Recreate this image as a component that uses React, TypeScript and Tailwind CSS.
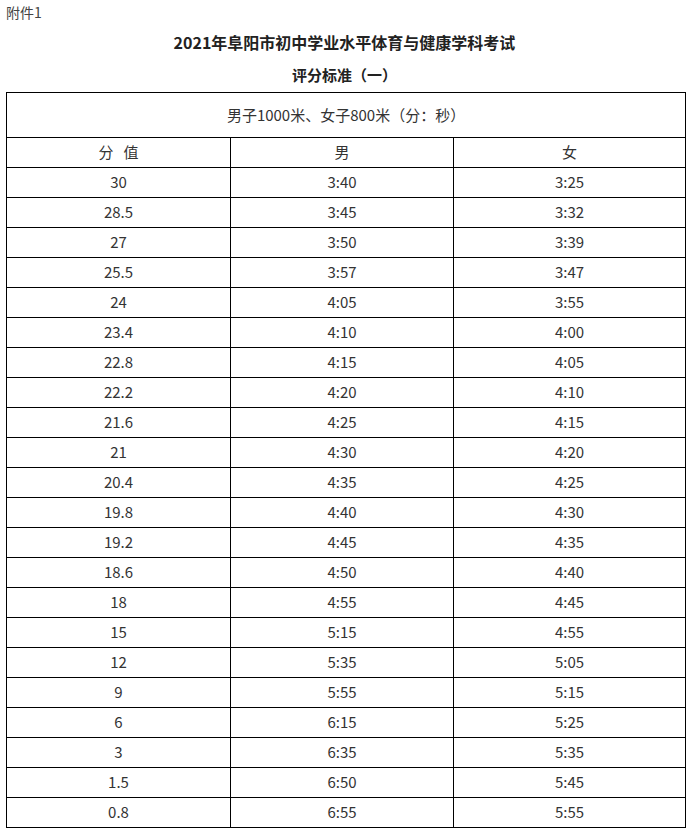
import React from "react";

const rows: [string, string, string][] = [
  ["30", "3:40", "3:25"],
  ["28.5", "3:45", "3:32"],
  ["27", "3:50", "3:39"],
  ["25.5", "3:57", "3:47"],
  ["24", "4:05", "3:55"],
  ["23.4", "4:10", "4:00"],
  ["22.8", "4:15", "4:05"],
  ["22.2", "4:20", "4:10"],
  ["21.6", "4:25", "4:15"],
  ["21", "4:30", "4:20"],
  ["20.4", "4:35", "4:25"],
  ["19.8", "4:40", "4:30"],
  ["19.2", "4:45", "4:35"],
  ["18.6", "4:50", "4:40"],
  ["18", "4:55", "4:45"],
  ["15", "5:15", "4:55"],
  ["12", "5:35", "5:05"],
  ["9", "5:55", "5:15"],
  ["6", "6:15", "5:25"],
  ["3", "6:35", "5:35"],
  ["1.5", "6:50", "5:45"],
  ["0.8", "6:55", "5:55"],
];

const cell = "border border-black text-center align-middle p-0 h-[30px]";

const App = () => {
  return (
    <div className="w-[689px] h-[834px] bg-white text-[#333] font-['Noto_Sans_CJK_SC','Noto_Sans',sans-serif] overflow-hidden">
      <div className="pl-[6px] pt-[2px] text-[14px] leading-[20px] text-[#444]">附件1</div>
      <div className="text-center font-bold text-[16px] leading-[20px] mt-[10px] text-[#222]">
        2021年阜阳市初中学业水平体育与健康学科考试
      </div>
      <div className="text-center font-bold text-[15px] leading-[20px] mt-[13px] text-[#222]">
        评分标准（一）
      </div>
      <table className="ml-[6px] mt-[7px] border-collapse w-[679px] table-fixed text-[15px]">
        <colgroup>
          <col className="w-[224px]" />
          <col className="w-[223px]" />
          <col className="w-[232px]" />
        </colgroup>
        <tbody>
          <tr>
            <td colSpan={3} className="border border-black text-center align-middle p-0 h-[45px]">
              男子1000米、女子800米（分：秒）
            </td>
          </tr>
          <tr>
            <td className={cell}>分&nbsp;&nbsp;&nbsp;值</td>
            <td className={cell}>男</td>
            <td className={cell}>女</td>
          </tr>
          {rows.map(([score, male, female]) => (
            <tr key={score}>
              <td className={cell}>{score}</td>
              <td className={cell}>{male}</td>
              <td className={cell}>{female}</td>
            </tr>
          ))}
        </tbody>
      </table>
    </div>
  );
};

export default App;
